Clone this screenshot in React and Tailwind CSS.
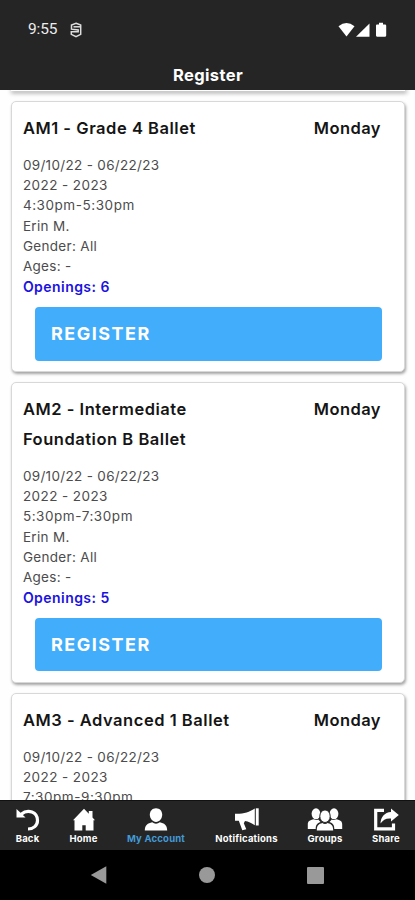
const CLASSES = [
  {
    title: ['AM1 - Grade 4 Ballet'],
    dates: '09/10/22 - 06/22/23',
    season: '2022 - 2023',
    time: '4:30pm-5:30pm',
    details: ['Erin M.', 'Gender: All', 'Ages: -'],
    openings: 6,
  },
  {
    title: ['AM2 - Intermediate', 'Foundation B Ballet'],
    dates: '09/10/22 - 06/22/23',
    season: '2022 - 2023',
    time: '5:30pm-7:30pm',
    details: ['Erin M.', 'Gender: All', 'Ages: -'],
    openings: 5,
  },
  {
    title: ['AM3 - Advanced 1 Ballet'],
    dates: '09/10/22 - 06/22/23',
    season: '2022 - 2023',
    time: '7:30pm-9:30pm',
    details: [],
  },
];

function ClassCard({ item }) {
  return (
    <article className="shrink-0 rounded-[5px] border border-[#d8d8d8] bg-white pt-[12px] pr-[22.5px] pb-[10.5px] pl-[10.5px] shadow-[1px_2px_3px_rgba(0,0,0,0.36)]">
      <div className="flex justify-between text-[16.5px] leading-[29.7px] font-semibold text-[#151515]">
        <h2 className="tracking-[0.53px]">
          {item.title.map((line) => (
            <span key={line} className="block whitespace-nowrap">{line}</span>
          ))}
        </h2>
        <span className="tracking-[0.45px]">Monday</span>
      </div>
      <div className="mt-[11px] text-[13.5px] leading-[20.35px] tracking-[0.32px] text-[#4c4c4c]">
        <p>{item.dates}</p>
        <p className="tracking-[0.42px]">{item.season}</p>
        <p className="tracking-[0.55px]">{item.time}</p>
        {item.details.map((line) => (
          <p key={line}>{line}</p>
        ))}
        {item.openings && (
          <p className="text-[14px] font-semibold tracking-[0.45px] text-[#1b12e0]">Openings: {item.openings}</p>
        )}
      </div>
      {item.openings && (
        <button className="mt-[10px] ml-[12px] block h-[53.5px] w-[347px] rounded-[4px] bg-[#42adfb] pl-[16px] text-left text-[18px] font-bold tracking-[1.5px] text-white">
          REGISTER
        </button>
      )}
    </article>
  );
}

function BackIcon() {
  return (
    <svg viewBox="0 0 24 24" className="h-6 w-6">
      <path d="M5.2 6.200C12 .5 21.500 4 21.500 12.500C21.500 17.500 17.500 21 12 21" fill="none" stroke="white" strokeWidth="3.200" />
      <path d="M.5 1L4 4.200 9.500 9.500H.5Z" fill="white" />
    </svg>
  );
}
function HomeIcon() {
  return (
    <svg viewBox="0 0 24 24" className="h-6 w-6" fill="white">
      <path d="M12 .8L1 12.200H2.500V22.500H10.300V17.300H13.700V22.500H21.500V12.200H23L20.500 9.500V3H16.800V5.800Z" />
    </svg>
  );
}
function AccountIcon() {
  return (
    <svg viewBox="0 0 24 24" className="h-6 w-6" fill="white">
      <path d="M12 .3c3.800 0 6.200 2.800 6.200 6.500S15.400 14 12 14 5.800 10.400 5.800 6.800 8.200.3 12 .3Z" />
      <path d="M.8 22.600c0-5.500 3-7.400 7.400-8.300 2.100 1.800 5.500 1.800 7.600 0 4.400.9 7.400 2.800 7.400 8.300Z" />
    </svg>
  );
}
function MegaphoneIcon() {
  return (
    <svg viewBox="0 0 26 24" className="h-6 w-[26px]" fill="white">
      <path d="M1 5.800C10 6 15 4.500 20.800 .6V17.300C17.500 14.700 14.500 13.500 11 12.900L9.800 15.200 12.300 21.300 8.300 22.300 4.800 12.800H1Z" />
      <path d="M21.800 .3H24.700V17.500H21.800Z" />
    </svg>
  );
}
function GroupIcon() {
  return (
    <svg viewBox="0 0 36 24" className="h-6 w-9" fill="white">
      <ellipse cx="9" cy="5.800" rx="4.400" ry="5.500" />
      <ellipse cx="27" cy="5.800" rx="4.400" ry="5.500" />
      <path d="M.8 21v-4.500c0-3.200 1.700-4.400 6.200-5.200 1.300 1 2.500 1 4.200.2l2.300 2.600c-3.500 1.300-4.700 2.800-4.800 6.900Z" />
      <path d="M35.200 21v-4.500c0-3.200-1.700-4.400-6.200-5.200-1.300 1-2.500 1-4.200.2l-2.300 2.600c3.500 1.300 4.700 2.800 4.800 6.900Z" />
      <ellipse cx="18" cy="8.200" rx="5.200" ry="6.300" stroke="#252525" strokeWidth="1" />
      <path d="M9.800 22.600c0-5.200 2-6.500 5.500-7.500 1.500 1.200 3.900 1.200 5.400 0 3.500 1 5.500 2.300 5.500 7.500Z" />
    </svg>
  );
}
function ShareIcon() {
  return (
    <svg viewBox="0 0 26 24" className="h-6 w-[26px]">
      <path d="M11 2.300H2.700V20.800H20.500V15.500" fill="none" stroke="white" strokeWidth="3.200" />
      <path d="M18 .5L25.800 7 18 13.500V10.500C13 10 10 12 7.500 15.500 7.700 9 11.500 4.300 18 3.900Z" fill="white" />
    </svg>
  );
}

const TABS = [
  { label: 'Back', icon: BackIcon, width: 'w-[55px]' },
  { label: 'Home', icon: HomeIcon, width: 'w-[57px]' },
  { label: 'My Account', icon: AccountIcon, width: 'w-[88px]', active: true },
  { label: 'Notifications', icon: MegaphoneIcon, width: 'w-[93px]' },
  { label: 'Groups', icon: GroupIcon, width: 'w-[64px]' },
  { label: 'Share', icon: ShareIcon, width: 'w-[58px]' },
];

export default function App() {
  return (
    <div className="flex h-[900px] w-[415px] flex-col overflow-hidden bg-[#fefefe] font-['Inter',sans-serif]">
      <header className="flex h-[90px] shrink-0 flex-col bg-[#252525] text-white">
        <div className="flex h-[60px] items-center pr-[28px] pl-[28px]">
          <span className="w-[42px] font-['Roboto',sans-serif] text-[15.5px] tracking-[-0.15px] text-[#ececec]">9:55</span>
          <svg viewBox="0 0 12 16" className="h-4 w-3" fill="none" stroke="#dedede" strokeWidth="1.500">
            <path d="M6 1.200L10.700 3V12.300L6 14.700 1.300 12.300V9.800H8.200V8L1.500 7.200V3Z" />
            <path d="M3.500 4.800H10.500" />
          </svg>
          <svg viewBox="0 0 50 16" className="ml-auto h-4 w-[50px]" fill="white">
            <path d="M1.500 4.200Q9.500-2 17.500 4.200L9.500 14.500Z" />
            <path d="M32.500 1.500V14.700H19Z" />
            <path d="M40 2.500H42V.8H46V2.500H48Q49.200 2.500 49.200 3.500V13.600Q49.200 14.700 48.200 14.700H40Q39 14.700 39 13.600V3.500Q39 2.500 40 2.500Z" />
          </svg>
        </div>
        <h1 className="pt-px pl-px text-center text-[16.5px] leading-[30px] font-bold tracking-[0.4px]">Register</h1>
      </header>

      <main className="flex h-[710px] shrink-0 flex-col gap-[10px] overflow-hidden pr-[10.5px] pl-[11.4px]">
        <div className="h-[1px] shrink-0 shadow-[1px_1px_4px_1px_rgba(0,0,0,0.4)]" />
        {CLASSES.map((item) => (
          <ClassCard key={item.title[0]} item={item} />
        ))}
      </main>

      <nav className="flex h-[50px] shrink-0 border-t border-[#111111] bg-[#252525]">
        {TABS.map(({ label, icon: Icon, width, active }) => (
          <button key={label} className={`${width} flex shrink-0 flex-col items-center pt-[7px]`}>
            <Icon />
            <span className={`text-[9.5px] leading-[13px] font-bold tracking-[0.2px] whitespace-nowrap ${active ? 'text-[#429bd7]' : 'text-white'}`}>{label}</span>
          </button>
        ))}
      </nav>

      <footer className="flex h-[50px] shrink-0 items-center justify-between bg-black pr-[91px] pl-[90px]">
        <svg viewBox="0 0 17 18" className="h-[18px] w-[17px]" fill="#999999">
          <path d="M.8 9L16.300.3V17.700Z" />
        </svg>
        <span className="h-4 w-4 rounded-full bg-[#999999]" />
        <span className="h-[17px] w-[17px] rounded-[1px] bg-[#999999]" />
      </footer>
    </div>
  );
}
